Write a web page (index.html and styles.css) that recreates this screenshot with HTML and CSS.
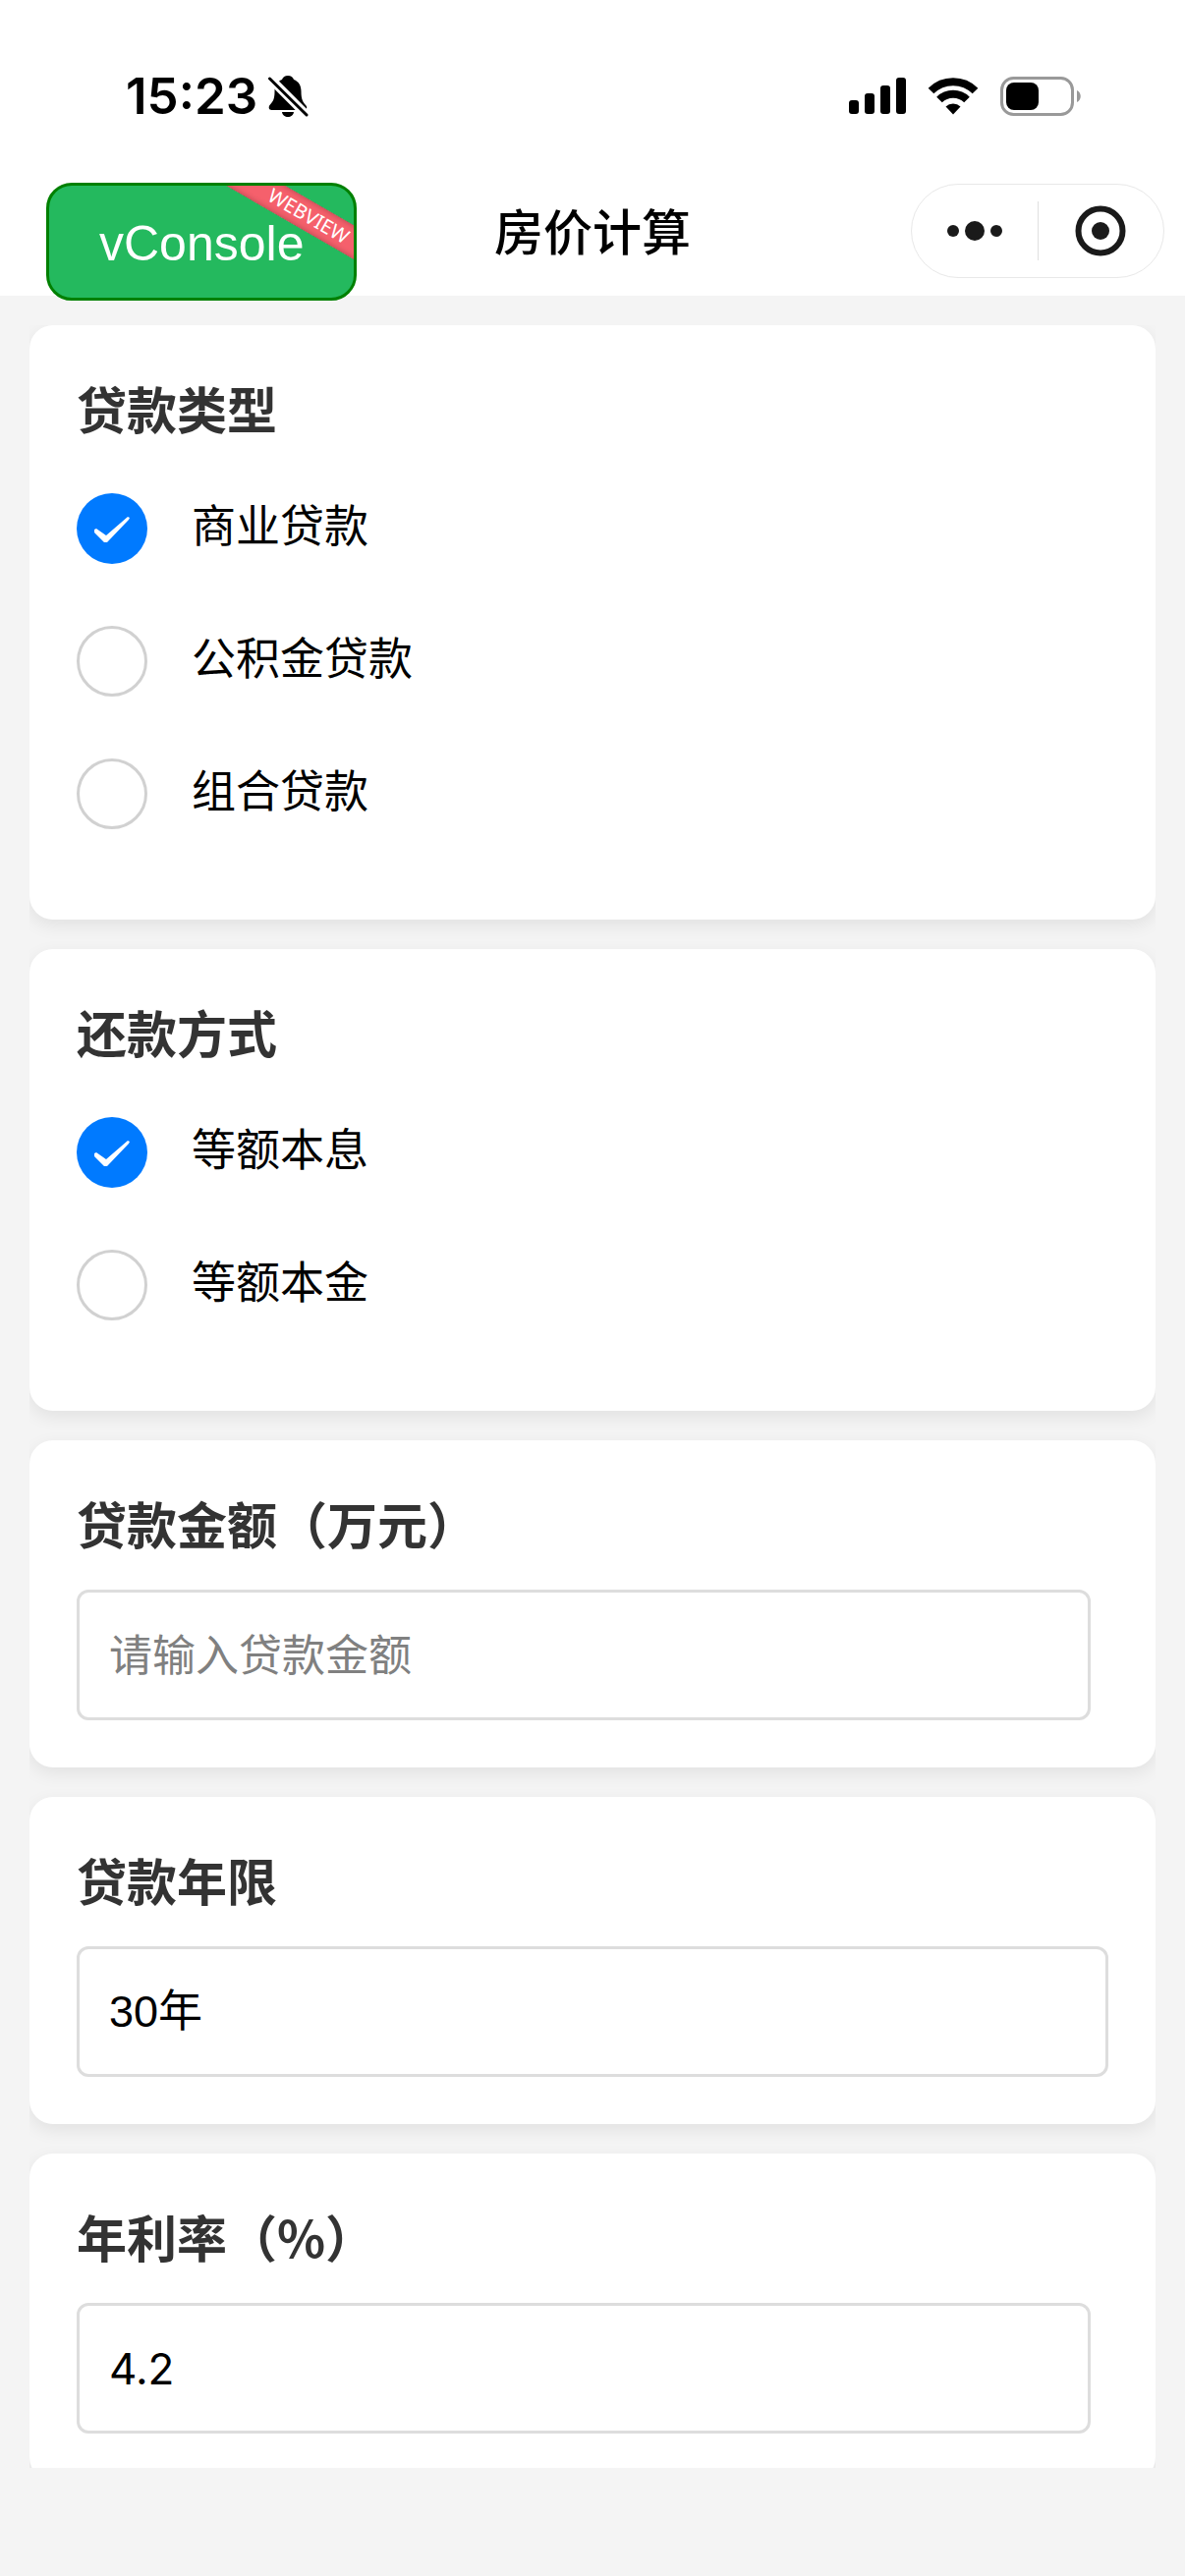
FILE: index.html
```html
<!DOCTYPE html>
<html lang="zh-CN">
<head>
  <meta charset="utf-8" />
  <meta name="viewport" content="width=device-width, initial-scale=1" />
  <title>房价计算</title>
  <link rel="stylesheet" href="styles.css">
</head>
<body>
  <header>
    <div class="status-bar">
      <div class="status-left">
        <span class="time">15:23</span>
        <svg class="bell" width="42" height="44" viewBox="0 0 42 44">
          <path d="M21 1c3 0 5 1.500 6 4 5 2 7.500 6 7.500 12 0 9 2 11 5 14.500 1.500 2 .5 4.500-2 4.500h-33c-3 0-3.500-3-2-5 3-3.500 5-5.500 5-14C7.500 11 10 7 15 5c1-2.500 3-4 6-4z"/>
          <path d="M15 38h12c-.5 3.500-3 5-6 5s-5.500-1.500-6-5z"/>
          <path d="M-1 0L43 44" stroke="#fff" stroke-width="9"/>
          <path d="M2.500 4L40 41" stroke="#000" stroke-width="3" stroke-linecap="round"/>
        </svg>
      </div>
      <div class="status-right">
        <svg width="58" height="38" viewBox="0 0 58 38">
          <rect x="0" y="23" width="10" height="14" rx="3"/>
          <rect x="16" y="16" width="10" height="21" rx="3"/>
          <rect x="32" y="8" width="10" height="29" rx="3"/>
          <rect x="48" y="0" width="10" height="37" rx="3"/>
        </svg>
        <svg width="52" height="38" viewBox="0 0 52 38">
          <path d="M3.500 13.500A32 32 0 0 1 48.500 13.500" fill="none" stroke="#000" stroke-width="8"/>
          <path d="M12 22.500A20 20 0 0 1 40 22.500" fill="none" stroke="#000" stroke-width="8"/>
          <path d="M26 37.500l-7.500-8a11 11 0 0 1 15 0z"/>
        </svg>
        <svg width="83" height="40" viewBox="0 0 83 40">
          <rect x="1.500" y="1.500" width="72" height="37" rx="12" fill="none" stroke="#999" stroke-width="3"/>
          <rect x="6" y="6" width="33" height="28" rx="8"/>
          <path d="M78 14c5 2 5 10 0 12z" fill="#999"/>
        </svg>
      </div>
    </div>
    <div class="nav-bar">
      <h1>房价计算</h1>
      <div class="capsule">
        <button type="button" aria-label="更多">
          <svg width="56" height="52" viewBox="0 0 56 52">
            <circle cx="6" cy="26" r="6"/>
            <circle cx="28" cy="26" r="10"/>
            <circle cx="50" cy="26" r="6"/>
          </svg>
        </button>
        <button type="button" aria-label="关闭">
          <svg width="52" height="52" viewBox="0 0 52 52">
            <circle cx="26" cy="26" r="22.500" fill="none" stroke="#1a1a1a" stroke-width="6"/>
            <circle cx="26" cy="26" r="9"/>
          </svg>
        </button>
      </div>
    </div>
    <button type="button" class="vconsole">vConsole<span class="ribbon">WEBVIEW</span></button>
  </header>

  <main>
    <section class="card">
      <h2 id="loanType">贷款类型</h2>
      <div role="radiogroup" aria-labelledby="loanType">
        <label class="radio-item"><input type="radio" name="loanType" value="commercial" checked />商业贷款</label>
        <label class="radio-item"><input type="radio" name="loanType" value="fund" />公积金贷款</label>
        <label class="radio-item"><input type="radio" name="loanType" value="mixed" />组合贷款</label>
      </div>
    </section>

    <section class="card">
      <h2 id="repayType">还款方式</h2>
      <div role="radiogroup" aria-labelledby="repayType">
        <label class="radio-item"><input type="radio" name="repayType" value="interest" checked />等额本息</label>
        <label class="radio-item"><input type="radio" name="repayType" value="principal" />等额本金</label>
      </div>
    </section>

    <section class="card">
      <h2><label for="amount">贷款金额（万元）</label></h2>
      <div class="form-field">
        <input type="text" inputmode="decimal" id="amount" placeholder="请输入贷款金额" />
      </div>
    </section>

    <section class="card">
      <h2><label for="years">贷款年限</label></h2>
      <select id="years">
        <option>30年</option>
        <option>25年</option>
        <option>20年</option>
        <option>15年</option>
        <option>10年</option>
      </select>
    </section>

    <section class="card">
      <h2><label for="rate">年利率（%）</label></h2>
      <div class="form-field">
        <input type="text" inputmode="decimal" id="rate" value="4.2" />
      </div>
    </section>
  </main>
</body>
</html>
```

FILE: styles.css
```css
* {
  box-sizing: border-box;
}
body {
  display: flex;
  flex-direction: column;
  height: 100vh;
  margin: 0;
  background: #f4f4f4;
  color: #000;
  font-family: Inter, "Noto Sans CJK SC", sans-serif;
}
svg {
  display: block;
}
header {
  position: relative;
  background: #fff;
}
h1, h2 {
  margin: 0;
}

/* status bar */
.status-bar {
  display: flex;
  justify-content: space-between;
  align-items: center;
  padding: 62px 105px 24px 128px;
}
.status-left {
  display: flex;
  align-items: center;
  gap: 10px;
}
.time {
  font-size: 51px;
  line-height: 72px;
  font-weight: 600;
}
.status-right {
  display: flex;
  align-items: center;
  gap: 22px;
}

/* nav bar */
.nav-bar {
  display: flex;
  justify-content: flex-end;
  align-items: center;
  padding: 29px 21px 18px;
}
.nav-bar h1 {
  position: absolute;
  left: 0;
  right: 0;
  padding-top: 4px;
  text-align: center;
  font-size: 50px;
  line-height: 72px;
  font-weight: 500;
  pointer-events: none;
}
.capsule {
  display: flex;
  width: 258px;
  height: 96px;
  border: 1px solid #e8e8e8;
  border-radius: 48px;
  align-items: center;
}
.capsule button {
  display: flex;
  flex: 1;
  justify-content: center;
  align-items: center;
  height: 60px;
  padding: 0;
  border: none;
  background: none;
  fill: #1a1a1a;
}
.capsule button + button {
  border-left: 1px solid #e0e0e0;
}

/* debug button floats over the page */
.vconsole {
  position: absolute;
  left: 47px;
  bottom: -5px;
  padding: 29px 51px 25px;
  border: 3px solid #008000;
  border-radius: 26px;
  background: #24b95e;
  color: #fff;
  font-family: "Liberation Sans", sans-serif;
  font-size: 50px;
  line-height: 60px;
  overflow: hidden;
}
.ribbon {
  position: absolute;
  top: 16px;
  right: -44px;
  width: 180px;
  background: #f5606c;
  box-shadow: inset 0 0 6px rgba(0,0,0,0.3);
  font-family: "Noto Sans", sans-serif;
  font-size: 20px;
  line-height: 30px;
  text-align: center;
  transform: rotate(30deg);
}

/* form */
main {
  flex: 1;
  min-height: 0;
  margin: 30px 30px 110px;
  overflow-y: auto;
  scrollbar-width: none;
}
.card {
  margin-bottom: 30px;
  padding: 48px;
  background: #fff;
  border-radius: 24px;
  box-shadow: 0 6px 18px rgba(0,0,0,0.08);
}
.card h2 {
  margin-bottom: 32px;
  color: #333;
  font-family: "Noto Sans CJK SC", sans-serif;
  font-size: 51px;
  line-height: 72px;
  font-weight: 700;
}
.radio-item {
  display: flex;
  align-items: flex-start;
  gap: 45px;
  padding: 19px 0 44px;
  font-size: 45px;
  line-height: 68px;
}
.radio-item input {
  appearance: none;
  width: 72px;
  height: 72px;
  margin: 0;
  border: 3px solid #d1d1d1;
  border-radius: 50%;
  background: #fff;
}
.radio-item input:checked {
  border: none;
  background: #007aff;
}
.radio-item input:checked::before {
  content: "";
  display: block;
  width: 72px;
  height: 72px;
  background: #fff;
  clip-path: polygon(18px 37px, 20px 36px, 30px 43px, 52px 24px, 54px 25px, 53px 27px, 31px 50px, 28px 50px, 18px 40px);
}
.form-field {
  padding-right: 18px;
}
.form-field input,
.card select {
  appearance: none;
  display: block;
  width: 100%;
  height: 133px;
  padding: 0 30px;
  border: 3px solid #ddd;
  border-radius: 12px;
  background: #fff;
  color: #000;
  font-family: inherit;
  font-size: 44px;
}
.card select {
  font-family: "Liberation Sans", "Noto Sans CJK SC", sans-serif;
  font-size: 45px;
}
.form-field input::placeholder {
  color: #808080;
}
```
